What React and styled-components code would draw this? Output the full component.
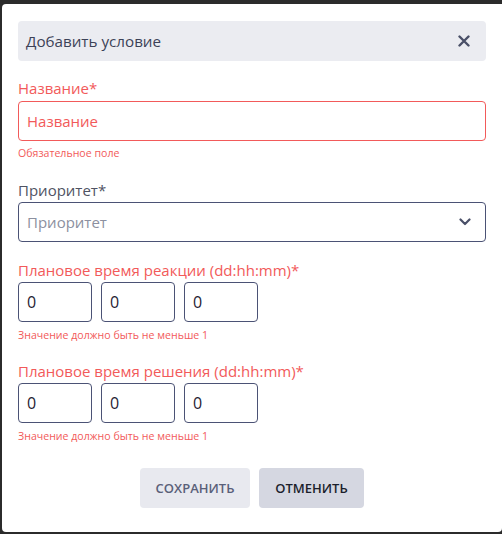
import React from "react";
import styled, { createGlobalStyle } from "styled-components";

const GlobalStyle = createGlobalStyle`
  html, body {
    margin: 0;
    padding: 0;
    background: #2b2b2b;
    font-family: "Open Sans", "Liberation Sans", sans-serif;
  }
`;

const Modal = styled.div`
  margin: 4px 0 2px 2px;
  width: 500px;
  height: 528px;
  box-sizing: border-box;
  padding: 17px 16px 0 16px;
  background: #fff;
  border-radius: 4px 0 4px 4px;
`;

const Header = styled.div`
  height: 40px;
  display: flex;
  align-items: center;
  justify-content: space-between;
  padding: 0 16px 0 8px;
  background: #ebecf1;
  border-radius: 4px;
  color: #3c4257;
  font-size: 15.2px;
`;

const CloseButton = styled.button`
  border: none;
  background: none;
  padding: 0;
  display: flex;
  cursor: pointer;
`;

const Field = styled.div`
  margin-top: ${(p) => p.gap}px;
`;

const Label = styled.div`
  font-size: 15px;
  line-height: 20px;
  margin-bottom: ${(p) => p.space || 2}px;
  color: ${(p) => (p.error ? "#f25a5a" : "#4f5363")};
`;

const TextInput = styled.div`
  height: 40px;
  box-sizing: border-box;
  display: flex;
  align-items: center;
  justify-content: space-between;
  padding: 0 14px 0 8px;
  border: 1px solid ${(p) => (p.error ? "#f25a5a" : "#4b5275")};
  border-radius: 4px;
  font-size: 15px;
  color: ${(p) => (p.error ? "#f25a5a" : "#8c90a0")};
`;

const TimeRow = styled.div`
  display: flex;
  gap: 9px;
`;

const TimeBox = styled.div`
  width: 74px;
  height: 40px;
  box-sizing: border-box;
  display: flex;
  align-items: center;
  padding-left: 8px;
  border: 1px solid #4b5275;
  border-radius: 4px;
  font-size: 16px;
  color: #1f2233;
`;

const Hint = styled.div`
  margin-top: ${(p) => p.gap || 6}px;
  font-size: 10.6px;
  line-height: 12px;
  color: #f25a5a;
`;

const Actions = styled.div`
  margin-top: 26px;
  display: flex;
  justify-content: center;
  gap: 9px;
`;

const Button = styled.button`
  height: 40px;
  width: ${(p) => p.width}px;
  border: none;
  border-radius: 4px;
  font-family: inherit;
  font-size: 13px;
  font-weight: 600;
  text-transform: uppercase;
  background: ${(p) => (p.primary ? "#d5d7e1" : "#e8e9ef")};
  color: ${(p) => (p.primary ? "#1c1f2c" : "#5a6079")};
`;

const Cross = () => (
  <svg width="12" height="12" viewBox="0 0 12 12">
    <path d="M1.5 1.5l9 9M10.5 1.5l-9 9" stroke="#4a5068" strokeWidth="2.4" strokeLinecap="round" />
  </svg>
);

const Chevron = () => (
  <svg width="12" height="8" viewBox="0 0 12 8">
    <path d="M1.5 1.5l4.5 4.5 4.5-4.5" fill="none" stroke="#4a5068" strokeWidth="2.2" strokeLinecap="round" strokeLinejoin="round" />
  </svg>
);

const TimeField = ({ label, gap }) => (
  <Field gap={gap}>
    <Label error>{label}</Label>
    <TimeRow>
      <TimeBox>0</TimeBox>
      <TimeBox>0</TimeBox>
      <TimeBox>0</TimeBox>
    </TimeRow>
    <Hint gap={7}>Значение должно быть не меньше 1</Hint>
  </Field>
);

const App = () => (
  <>
    <GlobalStyle />
    <Modal>
      <Header>
        <span>Добавить условие</span>
        <CloseButton>
          <Cross />
        </CloseButton>
      </Header>

      <Field gap={17}>
        <Label error space={3}>Название*</Label>
        <TextInput error>Название</TextInput>
        <Hint>Обязательное поле</Hint>
      </Field>

      <Field gap={21}>
        <Label>Приоритет*</Label>
        <TextInput>
          <span>Приоритет</span>
          <Chevron />
        </TextInput>
      </Field>

      <TimeField label="Плановое время реакции (dd:hh:mm)*" gap={18} />
      <TimeField label="Плановое время решения (dd:hh:mm)*" gap={20} />

      <Actions>
        <Button width={110}>Сохранить</Button>
        <Button width={105} primary>Отменить</Button>
      </Actions>
    </Modal>
  </>
);

export default App;
